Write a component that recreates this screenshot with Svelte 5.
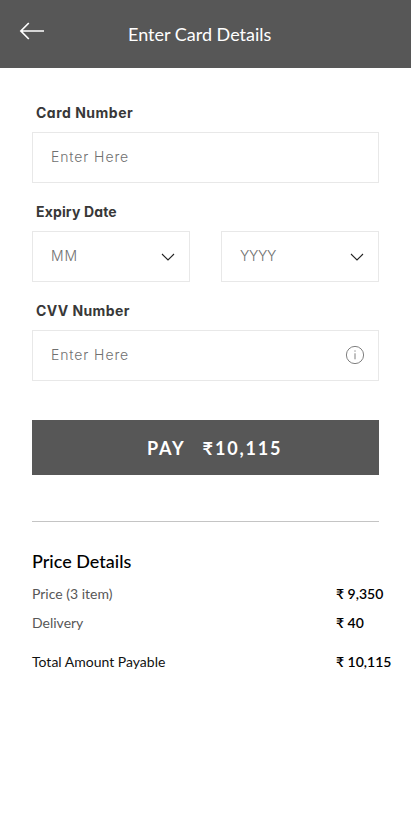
<script>
  const rows = [
    { label: 'Price (3 item)', value: '₹ 9,350', kind: 'price' },
    { label: 'Delivery', value: '₹ 40', kind: 'delivery' },
    { label: 'Total Amount Payable', value: '₹ 10,115', kind: 'total' }
  ];
</script>

{#snippet chevron()}
  <svg class="chevron" width="14" height="8" viewBox="0 0 14 8" fill="none" stroke="#222" stroke-width="1.1">
    <path d="M1 1l6 6 6-6" />
  </svg>
{/snippet}

<main>
  <header>
    <button class="back" aria-label="Back">
      <svg width="26" height="20" viewBox="0 0 26 20" fill="none" stroke="#fff" stroke-width="1.7">
        <path d="M9.8 2L1.9 10l7.9 8M1.9 10H25" />
      </svg>
    </button>
    <h1>Enter Card Details</h1>
  </header>

  <form>
    <div class="label card">Card Number</div>
    <div class="field"><span>Enter Here</span></div>
    <div class="label expiry">Expiry Date</div>
    <div class="pair">
      <div class="field"><span class="mm">MM</span>{@render chevron()}</div>
      <div class="field"><span class="yyyy">YYYY</span>{@render chevron()}</div>
    </div>
    <div class="label cvv">CVV Number</div>
    <div class="field">
      <span class="code">Enter Here</span>
      <svg class="info" width="20" height="20" viewBox="0 0 20 20" fill="none" stroke="#808080">
        <circle cx="10" cy="10" r="8.6" />
        <path d="M10 8.3v6M10 5.4v1.3" />
      </svg>
    </div>
    <button type="button" class="pay"><span class="word">PAY</span><span class="sum">₹10,115</span></button>
  </form>

  <section>
    <h2>Price Details</h2>
    {#each rows as row}
      <div class="row {row.kind}"><span>{row.label}</span><b>{row.value}</b></div>
    {/each}
  </section>
</main>

<style>
  :global(body) { background: #fff; }
  main { box-sizing: border-box; width: 411px; height: 823px; overflow: hidden; background: #fff; font-family: Lato, sans-serif; }
  header { box-sizing: border-box; height: 68px; display: flex; background: #575757; color: #fff; }
  button { border: 0; padding: 0; margin: 0; background: none; color: #fff; font-family: inherit; }
  .back { display: block; width: 26px; height: 20px; margin: 21px 0 0 19px; }
  .back svg { display: block; }
  h1 { margin: 23px 0 0 83px; font-size: 18px; line-height: 22px; font-weight: 400; white-space: nowrap; }
  form { padding: 35px 32px 0; }
  .label { height: 20px; padding-left: 4px; margin-bottom: 9px; font: 700 14px/20px Inter, sans-serif; font-feature-settings: 'cv11'; color: #383838; letter-spacing: .5px; }
  .expiry { letter-spacing: .15px; }
  .cvv { letter-spacing: .4px; }
  .field { box-sizing: border-box; height: 51px; display: flex; align-items: center; justify-content: space-between; padding: 0 13px 1px 18px; border: 1px solid #e8e8e8; margin-bottom: 19px; font: 300 14px/20px Inter, sans-serif; font-feature-settings: 'cv11'; color: #707070; letter-spacing: .9px; }
  .pair { display: flex; gap: 31px; }
  .pair .field { flex: 1; padding-right: 14px; }
  .yyyy { letter-spacing: -.3px; }
  .chevron { margin-top: 2px; }
  .pay { width: 100%; height: 55px; margin-top: 39px; display: flex; align-items: center; padding: 1px 0 0 115px; background: #575757; font-size: 18px; line-height: 22px; font-weight: 700; letter-spacing: 1.85px; }
  .sum { margin-left: 17px; }
  section { margin: 46px 0 0 32px; }
  section::before { content: ''; display: block; width: 347px; height: 1px; background: #c4c4c4; }
  h2 { margin: 28px 0 0; font-size: 18px; line-height: 22px; font-weight: 500; color: #000; }
  .row { display: flex; font-size: 14px; line-height: 20px; color: #575757; white-space: nowrap; }
  .row span { width: 304px; }
  .row b { font-weight: 600; color: #000; }
  .price { margin-top: 12px; }
  .delivery { margin-top: 9px; }
  .total { margin-top: 19px; }
  .total span { color: #111; }
</style>
